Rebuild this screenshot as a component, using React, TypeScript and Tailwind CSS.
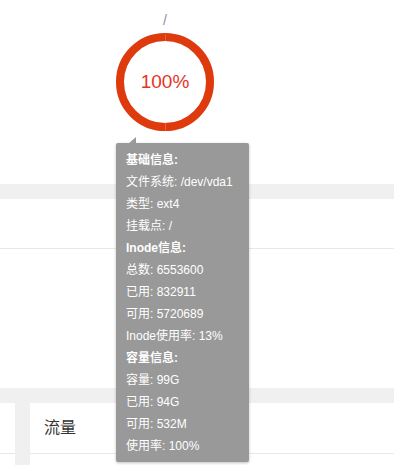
import React from 'react';

const lines: { text: string; bold?: boolean }[] = [
  { text: '基础信息:', bold: true },
  { text: '文件系统: /dev/vda1' },
  { text: '类型: ext4' },
  { text: '挂载点: /' },
  { text: 'Inode信息:', bold: true },
  { text: '总数: 6553600' },
  { text: '已用: 832911' },
  { text: '可用: 5720689' },
  { text: 'Inode使用率: 13%' },
  { text: '容量信息:', bold: true },
  { text: '容量: 99G' },
  { text: '已用: 94G' },
  { text: '可用: 532M' },
  { text: '使用率: 100%' },
];

const DiskRing: React.FC<{ percent: number }> = ({ percent }) => (
  <div className="relative w-[98px] h-[98px]">
    <svg width="98" height="98" viewBox="0 0 98 98" className="absolute inset-0">
      <circle cx="49" cy="49" r="45" fill="none" stroke="#ebeef5" strokeWidth="8" />
      <circle cx="49" cy="49" r="45" fill="none" stroke="#df3a0d" strokeWidth="8" />
      <line x1="49.5" y1="1" x2="49.5" y2="8" stroke="#e7633f" strokeWidth="1" />
      <line x1="49.5" y1="90" x2="49.5" y2="97" stroke="#e7633f" strokeWidth="1" />
    </svg>
    <div className="absolute inset-0 flex items-center justify-center text-[19px] text-[#e5341f] font-light">
      {percent}%
    </div>
  </div>
);

export default function App() {
  return (
    <div className="relative w-[394px] h-[465px] overflow-hidden bg-white font-['Liberation_Sans','Noto_Sans_CJK_SC',sans-serif]">
      <div className="h-[184px] w-[330px] flex flex-col items-center pt-[12px]">
        <div className="text-[14px] leading-[16px] text-[#8391a5]">/</div>
        <div className="mt-[5px]">
          <DiskRing percent={100} />
        </div>
      </div>
      <div className="h-[15px] bg-[#f0f0f0]" />
      <div className="h-[50px] border-b border-[#e8e8e8]" />
      <div className="h-[139px]" />
      <div className="h-[15px] bg-[#f0f0f0]" />
      <div className="flex h-[62px]">
        <div className="w-[15px] h-[51px] border-b border-[#e8e8e8]" />
        <div className="w-[15px] bg-[#f0f0f0]" />
        <div className="flex-1">
          <div className="h-[51px] border-b border-[#e8e8e8] pl-[14px] flex items-center text-[16px] text-[#333]">
            流量
          </div>
        </div>
      </div>

      <div className="absolute left-[116px] top-[143px] w-[133px] bg-[#999999] rounded-[2px] shadow-[0_1px_3px_rgba(0,0,0,0.25)] pt-[6px] pb-[5px] pl-[10px] text-white text-[12px] leading-[22px]">
        <svg width="8" height="7" viewBox="0 0 8 7" className="absolute left-[12px] -top-[6px]">
          <polygon points="0,7 8,0 8,7" fill="#999999" />
        </svg>
        {lines.map((l, i) => (
          <div key={i} className={l.bold ? 'font-bold whitespace-nowrap' : 'whitespace-nowrap'}>
            {l.text}
          </div>
        ))}
      </div>
    </div>
  );
}
